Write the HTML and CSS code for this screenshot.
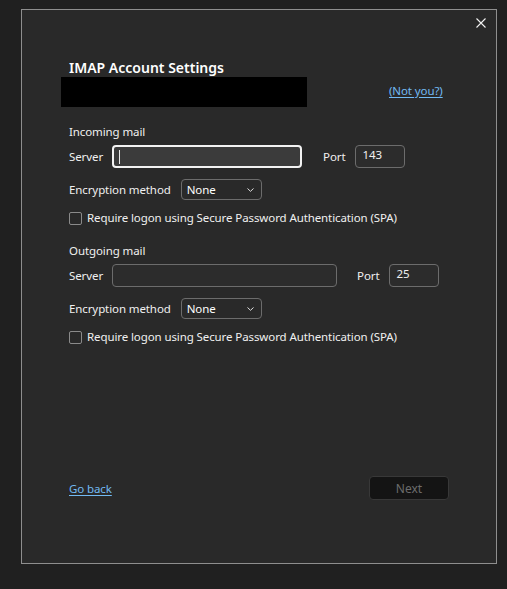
FILE: index.html
```html
<!DOCTYPE html>
<html lang="en">
<head>
<meta charset="utf-8">
<title>IMAP Account Settings</title>
<link rel="stylesheet" href="styles.css">
</head>
<body>
<div class="window">
  <div class="titlebar">
    <button class="close" aria-label="Close">
      <svg width="10" height="10" viewBox="0 0 10 10"><path d="M0.5 0.5 L9.5 9.5 M9.5 0.5 L0.5 9.5" stroke="#f2f2f2" stroke-width="1.1" fill="none"/></svg>
    </button>
  </div>
  <div class="content">
    <h1 class="title">IMAP Account Settings</h1>
    <div class="account-row">
      <div class="redacted"></div>
      <a class="link not-you" href="#">(Not you?)</a>
    </div>

    <section class="group group-in">
      <div class="group-label">Incoming mail</div>
      <div class="row server-row">
        <span class="label">Server</span>
        <div class="input server focused"><span class="caret"></span></div>
        <span class="label port-label">Port</span>
        <div class="input port">143</div>
      </div>
      <div class="row enc-row">
        <span class="label">Encryption method</span>
        <div class="select"><span>None</span>
          <svg width="7" height="4" viewBox="0 0 7 4"><path d="M0.5 0.5 L3.5 3.3 L6.5 0.5" stroke="#e0e0e0" stroke-width="1" fill="none"/></svg>
        </div>
      </div>
      <div class="row check-row">
        <span class="checkbox"></span>
        <span class="label">Require logon using Secure Password Authentication (SPA)</span>
      </div>
    </section>

    <section class="group group-out">
      <div class="group-label">Outgoing mail</div>
      <div class="row server-row">
        <span class="label">Server</span>
        <div class="input server wide"></div>
        <span class="label port-label">Port</span>
        <div class="input port">25</div>
      </div>
      <div class="row enc-row">
        <span class="label">Encryption method</span>
        <div class="select"><span>None</span>
          <svg width="7" height="4" viewBox="0 0 7 4"><path d="M0.5 0.5 L3.5 3.3 L6.5 0.5" stroke="#e0e0e0" stroke-width="1" fill="none"/></svg>
        </div>
      </div>
      <div class="row check-row">
        <span class="checkbox"></span>
        <span class="label">Require logon using Secure Password Authentication (SPA)</span>
      </div>
    </section>

    <div class="footer">
      <a class="link" href="#">Go back</a>
      <button class="next" disabled>Next</button>
    </div>
  </div>
</div>
</body>
</html>
```
FILE: styles.css
```css
* { box-sizing: border-box; }
html, body { margin: 0; padding: 0; }
body {
  background: #202020;
  width: 507px;
  height: 589px;
  overflow: hidden;
  font-family: "Noto Sans", "Open Sans", sans-serif;
  font-size: 11.5px;
  letter-spacing: -0.1px;
  color: #f0f0f0;
}
.window {
  margin: 9px 0 0 21px;
  width: 476px;
  height: 555px;
  border: 1px solid #8e8e8e;
  background: #292929;
  display: flex;
  flex-direction: column;
}
.titlebar {
  display: flex;
  justify-content: flex-end;
  padding: 8px 10px 0 0;
}
.close {
  width: 10px;
  height: 10px;
  padding: 0;
  border: 0;
  background: none;
  display: block;
}
.close svg { display: block; }
.content {
  flex: 1;
  display: flex;
  flex-direction: column;
  padding: 0 47px 63px 47px;
}
.title {
  margin: 30px 0 0 0;
  font-size: 14px;
  line-height: 19px;
  font-weight: 600;
  letter-spacing: 0;
  color: #ffffff;
}
.account-row {
  display: flex;
  align-items: center;
  margin-left: -8px;
}
.redacted {
  width: 246px;
  height: 30px;
  background: #000;
}
.link {
  color: #72baf3;
  text-decoration: underline;
  text-underline-offset: 2px;
}
.not-you { margin-left: 82px; margin-top: -4px; }
.group-in { margin-top: 17px; }
.group-out { margin-top: 17px; }
.group-label { line-height: 16px; }
.row {
  display: flex;
  align-items: center;
}
.server-row { margin-top: 5px; }
.enc-row { margin-top: 11px; }
.check-row { margin-top: 10px; }
.label { line-height: 16px; }
.input {
  height: 23px;
  border: 1px solid #6c6c6c;
  border-radius: 4px;
  background: #2c2c2c;
  padding: 0 6px;
  line-height: 18px;
}
.server { margin-left: 9px; width: 190px; display: flex; align-items: center; }
.server.wide { width: 225px; }
.focused {
  border: 2px solid #f2f2f2;
  background: #3b3b3b;
  padding-left: 5px;
}
.caret {
  width: 1px;
  height: 14px;
  background: #e8e8e8;
}
.port-label { margin-left: 21px; }
.server.wide + .port-label { margin-left: 20px; }
.port { margin-left: 10px; width: 50px; }
.select {
  margin-left: 10px;
  width: 81px;
  height: 21px;
  border: 1px solid #6c6c6c;
  border-radius: 4px;
  display: flex;
  align-items: center;
  justify-content: space-between;
  padding: 0 7px 0 5px;
  line-height: 18px;
  color: #ffffff;
}
.select svg { display: block; }
.checkbox {
  width: 13px;
  height: 13px;
  border: 1px solid #8a8a8a;
  border-radius: 2px;
  margin-right: 5px;
}
.footer {
  margin-top: auto;
  display: flex;
  align-items: center;
  justify-content: space-between;
}
.next {
  width: 80px;
  height: 24px;
  background: #141414;
  border: 1px solid #383838;
  border-radius: 4px;
  color: #6c6c6c;
  font-family: inherit;
  font-size: 12px;
  padding: 0;
}
```
